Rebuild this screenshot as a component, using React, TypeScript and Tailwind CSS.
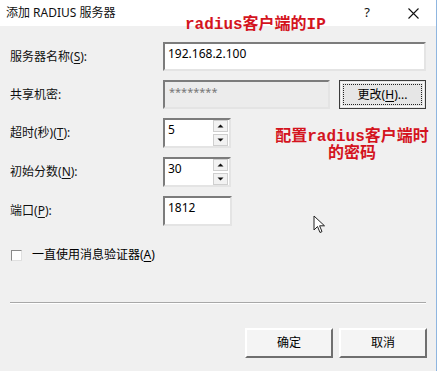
const ui = { fontFamily: '"Noto Sans", "Noto Sans CJK SC", sans-serif' };
const note = { fontFamily: '"Liberation Mono", "Noto Sans CJK SC", monospace' };

const sunken =
  "border-2 border-t-[#7c7c7c] border-l-[#7c7c7c] border-b-[#e4e4e4] border-r-[#e4e4e4]";

const Label = ({ text, k, tail = "):" }: { text: string; k?: string; tail?: string }) => (
  <div className="w-[163px] shrink-0 pl-[10px] text-[12px] text-[#111]">
    {text}
    {k && (
      <>
        (<span className="underline underline-offset-2">{k}</span>
        {tail}
      </>
    )}
  </div>
);

const Arrow = ({ up }: { up?: boolean }) => (
  <svg width="7" height="4" viewBox="0 0 7 4">
    <path d={up ? "M0.5 3.5 L3.5 0.5 L6.5 3.5 Z" : "M0.5 0.5 L3.5 3.5 L6.5 0.5 Z"} fill="#111" />
  </svg>
);

const Spin = ({ value }: { value: string }) => (
  <div className={`flex w-[68px] h-[30px] bg-white ${sunken}`}>
    <div className="flex-1 pl-[3px] pt-[3px] text-[12px] leading-[14px]">{value}</div>
    <div className="flex flex-col gap-[2px] w-[15px] mr-[1px]">
      <div className="flex-1 flex items-center justify-center bg-[#f2f2f2] border border-[#cfcfcf]">
        <Arrow up />
      </div>
      <div className="flex-1 flex items-center justify-center bg-[#f2f2f2] border border-[#cfcfcf]">
        <Arrow />
      </div>
    </div>
  </div>
);

const Button = ({ children }: { children: React.ReactNode }) => (
  <div className="w-[88px] h-[30px] flex items-center justify-center text-[12px] bg-[#f4f4f4] border-2 border-t-white border-l-white border-b-[#6f6f6f] border-r-[#6f6f6f]">
    {children}
  </div>
);

export default function App() {
  return (
    <div className="relative w-[443px] h-[371px] flex bg-white overflow-hidden" style={ui}>
      <div className="w-[436px] flex flex-col bg-[#f0f0f0]">
        <div className="h-[26px] bg-white flex items-center pl-[6px] text-[12px] text-[#111]">
          <span className="flex-1">添加 RADIUS 服务器</span>
          <span className="w-[46px] text-center text-[13px]">?</span>
          <span className="w-[46px] flex justify-center">
            <svg width="11" height="11" viewBox="0 0 11 11">
              <path d="M0.5 0.5 L10.5 10.5 M10.5 0.5 L0.5 10.5" stroke="#111" strokeWidth="1.1" />
            </svg>
          </span>
        </div>

        <div className="mt-[16px] flex items-center h-[29px]">
          <Label text="服务器名称" k="S" />
          <div className={`w-[263px] h-[29px] bg-white pl-[3px] pt-[3px] text-[12px] leading-[14px] ${sunken}`}>
            192.168.2.100
          </div>
        </div>

        <div className="mt-[9px] flex items-center h-[29px]">
          <Label text="共享机密:" />
          <div className={`w-[167px] h-[29px] bg-[#ececec] pl-[4px] pt-[3px] text-[11px] leading-[13px] text-[#777] ${sunken}`}>
            ********
          </div>
          <div className="ml-[9px] w-[87px] h-[29px] border border-[#3c3c3c] bg-[#e6e6e6] p-[1px]">
            <div className="h-full border border-[#f8f8f8] p-[1px]">
              <div className="h-full border border-dotted border-[#222] flex items-center justify-center text-[12px]">
                更改(<span className="underline underline-offset-2">H</span>)...
              </div>
            </div>
          </div>
        </div>

        <div className="mt-[9px] flex items-center">
          <Label text="超时(秒)" k="T" />
          <Spin value="5" />
        </div>
        <div className="mt-[9px] flex items-center">
          <Label text="初始分数" k="N" />
          <Spin value="30" />
        </div>
        <div className="mt-[9px] flex items-center">
          <Label text="端口" k="P" />
          <div className={`w-[69px] h-[30px] bg-white pl-[3px] pt-[3px] text-[12px] leading-[14px] ${sunken}`}>
            1812
          </div>
        </div>

        <div className="mt-[20px] flex items-center pl-[11px] gap-[10px] text-[12px]">
          <div className="w-[11px] h-[11px] bg-white border border-t-[#8a8a8a] border-l-[#8a8a8a] border-b-[#e0e0e0] border-r-[#e0e0e0]" />
          <span>
            一直使用消息验证器(<span className="underline underline-offset-2">A</span>)
          </span>
        </div>

        <div className="mt-[38px] mx-[10px] h-px bg-[#a8a8a8] border-b border-white box-content" />

        <div className="mt-[24px] flex justify-end gap-[6px] pr-[9px]">
          <Button>确定</Button>
          <Button>取消</Button>
        </div>
      </div>
      <div className="w-px bg-[#8fb6e0]" />

      <div
        className="absolute left-[185px] top-[16px] text-[16px] font-bold text-[#d4141e] leading-[18px]"
        style={note}
      >
        radius客户端的IP
      </div>
      <div
        className="absolute left-[272px] top-[129px] w-[160px] text-center text-[16px] font-bold text-[#d4141e] leading-[17px]"
        style={note}
      >
        配置radius客户端时
        <br />
        的密码
      </div>

      <svg className="absolute left-[313px] top-[215px]" width="14" height="19" viewBox="0 0 14 19">
        <path
          d="M1 1 L1 15 L4.5 11.5 L7 17.5 L9 16.6 L6.6 10.8 L11.5 10.8 Z"
          fill="white"
          stroke="#222"
          strokeWidth="1"
          strokeLinejoin="round"
        />
      </svg>
    </div>
  );
}
